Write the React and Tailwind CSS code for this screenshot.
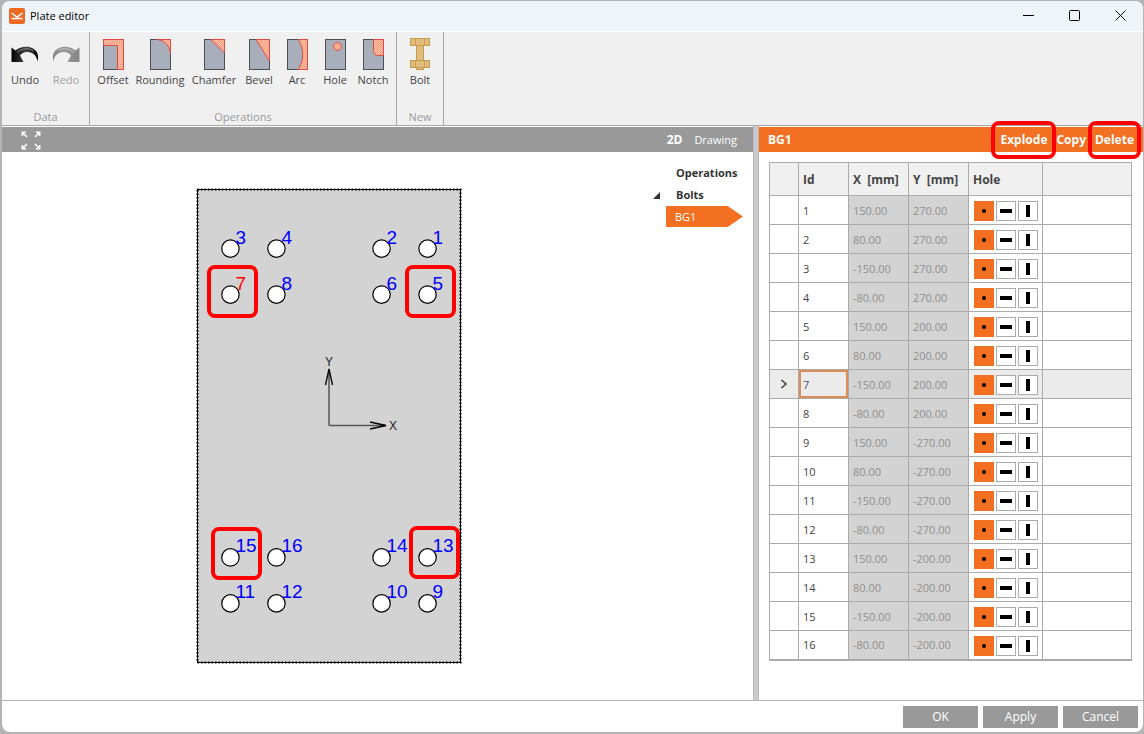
const operations = [
  { name: "Offset", width: "w-[38px]", cut: "M0.5 0.5H20.5V30.5H14.5V6.5H0.5Z" },
  { name: "Rounding", width: "w-[56px]", cut: "M7 0.5H20.5V15C20 7 14 1 7 0.5Z" },
  { name: "Chamfer", width: "w-[52px]", cut: "M7 0.5H20.5V14Z" },
  { name: "Bevel", width: "w-[38px]", cut: "M7 0.5H20.5V22Z" },
  { name: "Arc", width: "w-[38px]", cut: "M11.5 0.5H20.5V30.5H11.5C17 21 17 10 11.5 0.5Z" },
  { name: "Hole", width: "w-[38px]", cut: "M12.5 3.5A4 4 0 1 1 12.4 3.5Z" },
  { name: "Notch", width: "w-[38px]", cut: "M10.5 0.5H20.5V16.5H15.5Q10.5 16.5 10.5 11.5Z" },
]

const bolts = [
  [150, 270],
  [80, 270],
  [-150, 270],
  [-80, 270],
  [150, 200],
  [80, 200],
  [-150, 200],
  [-80, 200],
  [150, -270],
  [80, -270],
  [-150, -270],
  [-80, -270],
  [150, -200],
  [80, -200],
  [-150, -200],
  [-80, -200],
].map(([x, y], i) => ({ id: i + 1, x, y }))

const selectedId = 7

// top left corners of the highlight frames on the plate
const frames = [
  [16, 82],
  [214, 82],
  [20, 344],
  [218, 343],
]

function Logo() {
  return (
    <svg width="16" height="16" viewBox="0 0 16 16">
      <rect width="16" height="16" rx="2" fill="#ee6a23" />
      <path d="M2.5 5L8 9L13.5 5M2.5 10.5H13.5" fill="none" stroke="#fff" strokeWidth="1.5" />
    </svg>
  )
}

function UndoIcon({ redo }) {
  const id = redo ? "redoFill" : "undoFill"
  return (
    <svg width="28" height="17" viewBox="0 0 28 17" className={redo ? "-scale-x-100" : ""}>
      <defs>
        <linearGradient id={id} x1="0" y1="0" x2="1" y2="0">
          <stop offset="0" stopColor={redo ? "#858585" : "#000"} />
          <stop offset="0.55" stopColor={redo ? "#9a9a9a" : "#444"} />
          <stop offset="1" stopColor={redo ? "#858585" : "#000"} />
        </linearGradient>
      </defs>
      <path
        d="M0.5 1.5L4.5 4.5C9 0.5 17 -0.5 22 2.5C27 5.5 28 10 26.5 15.5C26 10 22 6 16.5 6C12.5 6 10 8 9 9.5L12.5 16H0.5Z"
        fill={`url(#${id})`}
      />
      <path d="M6 6.5C11 2 18 1.5 22.5 5" fill="none" stroke={redo ? "#c4c4c4" : "#888"} strokeWidth="1" />
    </svg>
  )
}

function PlateIcon({ cut }) {
  return (
    <svg width="21" height="31" viewBox="0 0 21 31">
      <defs>
        <pattern id="hatch" width="2" height="2" patternUnits="userSpaceOnUse">
          <rect width="2" height="2" fill="#ffc0a0" />
          <rect width="1" height="1" fill="#f99d85" />
          <rect x="1" y="1" width="1" height="1" fill="#f99d85" />
        </pattern>
      </defs>
      <rect x="0.5" y="0.5" width="20" height="30" fill="#a9afba" stroke="#4d4f55" />
      <path d={cut} fill="url(#hatch)" stroke="#e04a48" />
    </svg>
  )
}

function BoltIcon() {
  return (
    <svg width="20" height="32" viewBox="0 0 20 32" fill="#e0bd7b" stroke="#c39c51">
      <rect x="6.5" y="7.5" width="7" height="15" />
      <rect x="0.5" y="0.5" width="19" height="7" />
      <path d="M5.5 0.5V7.5M14.5 0.5V7.5" />
      <rect x="0.5" y="22.5" width="19" height="7" />
      <path d="M5.5 22.5V29.5M14.5 22.5V29.5" />
      <rect x="6.5" y="29.5" width="7" height="2" />
    </svg>
  )
}

function ExpandIcon() {
  return (
    <svg width="20" height="19" viewBox="0 0 20 19" fill="none" stroke="#fff" strokeWidth="1.5">
      <path d="M1.3 5V1.3H5M1.3 1.3L6 6M15 1.3H18.7V5M18.7 1.3L14 6M1.3 14V17.7H5M1.3 17.7L6 13M18.7 14V17.7H15M18.7 17.7L14 13" />
    </svg>
  )
}

function RibbonButton({ label, disabled, className = "", children }) {
  return (
    <button
      disabled={disabled}
      className={`flex flex-col items-center ${disabled ? "text-[#a0a0a0]" : "text-[#444]"} ${className}`}
    >
      <span className="flex h-8 items-center">{children}</span>
      <span className="mt-0.5 leading-4">{label}</span>
    </button>
  )
}

function RibbonGroup({ title, className, children }) {
  return (
    <section className={`flex flex-col justify-between border-r border-[#a9a9a9] pt-1.5 ${className}`}>
      <div className="flex justify-between">{children}</div>
      <h2 className="text-center leading-4 text-[#9a9a9a]">{title}</h2>
    </section>
  )
}

function Plate() {
  return (
    <svg width="272" height="482" viewBox="0 0 272 482" className="font-['Liberation_Sans',Arial,sans-serif]">
      <rect x="4.5" y="4.5" width="263" height="473" fill="#d3d3d3" stroke="#000" />
      <rect x="4.5" y="4.5" width="263" height="473" fill="none" stroke="#000" strokeWidth="2" strokeDasharray="1.5 2" />
      {bolts.map((bolt) => {
        const cx = 136 + bolt.x * 0.657
        const cy = 241 - bolt.y * 0.657
        return (
          <g key={bolt.id}>
            <circle cx={cx} cy={cy} r="8.7" fill="#fff" stroke="#000" strokeWidth="1.2" />
            <text x={cx + 5} y={cy - 5} fontSize="19" fill={bolt.id === selectedId ? "#f00" : "#00f"}>
              {bolt.id}
            </text>
          </g>
        )
      })}
      <path d="M136 240.5V184M136 240.5H193" fill="none" stroke="#555" strokeWidth="1.5" />
      <path d="M132.5 200L136 184L139.5 200M177 237L193 240.5L177 244" fill="none" stroke="#000" strokeWidth="1.3" />
      <g fontSize="12" fill="#222" textAnchor="middle">
        <text x="136" y="181">Y</text>
        <text x="200" y="245">X</text>
      </g>
      {frames.map(([x, y]) => (
        <rect key={`${x}-${y}`} x={x} y={y} width="47" height="49" rx="6" fill="none" stroke="#f00" strokeWidth="4" />
      ))}
    </svg>
  )
}

function HoleButtons({ id }) {
  return (
    <div className="flex gap-0.5 pl-[5px]">
      <button aria-label={`Round hole ${id}`} className="flex size-5 items-center justify-center bg-[#f36f21]">
        <span className="size-1 rounded-full bg-black" />
      </button>
      <button aria-label={`Horizontal slot ${id}`} className="flex size-5 items-center justify-center border border-[#ababab] bg-white">
        <span className="h-1 w-3 bg-black" />
      </button>
      <button aria-label={`Vertical slot ${id}`} className="flex size-5 items-center justify-center border border-[#ababab] bg-white">
        <span className="h-3 w-1 bg-black" />
      </button>
    </div>
  )
}

function BoltTable() {
  return (
    <table className="w-full table-fixed border-collapse border border-b-2 border-[#ababab] text-[#444]">
      <colgroup>
        <col className="w-[29px]" />
        <col className="w-[50px]" />
        <col className="w-[60px]" />
        <col className="w-[60px]" />
        <col className="w-[74px]" />
        <col />
      </colgroup>
      <thead>
        <tr className="h-[33px] bg-[#f0f0f0] text-left text-[12px] [&>th]:border [&>th]:border-[#ababab] [&>th]:px-1 [&>th]:pt-0.5 [&>th]:font-bold [&>th]:whitespace-pre">
          <th />
          <th>Id</th>
          <th>X  [mm]</th>
          <th>Y  [mm]</th>
          <th>Hole</th>
          <th />
        </tr>
      </thead>
      <tbody>
        {bolts.map((bolt) => {
          const selected = bolt.id === selectedId
          return (
            <tr
              key={bolt.id}
              className={`h-[29px] [&>td]:border [&>td]:border-[#ababab] [&>td]:p-0 ${selected ? "bg-[#ebebeb]" : "bg-white"}`}
            >
              <td>
                {selected && (
                  <svg width="8" height="10" viewBox="0 0 8 10" className="mx-auto">
                    <path d="M1.5 1L6 5L1.5 9" fill="none" stroke="#444" strokeWidth="1.6" />
                  </svg>
                )}
              </td>
              <td className="relative">
                <div className={selected ? "px-1 pt-px text-[#5a4a78]" : "px-1 pt-px"}>{bolt.id}</div>
                {selected && <span className="absolute inset-0 z-10 border-2 border-[#dc7633]/80" />}
              </td>
              <td className="bg-[#d3d3d3] text-[#909090]">
                <div className="px-1 pt-px">{bolt.x.toFixed(2)}</div>
              </td>
              <td className="bg-[#d3d3d3] text-[#909090]">
                <div className="px-1 pt-px">{bolt.y.toFixed(2)}</div>
              </td>
              <td>
                <div className="pt-0.5">
                  <HoleButtons id={bolt.id} />
                </div>
              </td>
              <td />
            </tr>
          )
        })}
      </tbody>
    </table>
  )
}

function TitleBar() {
  return (
    <header className="flex h-[31px] items-center justify-between border-b border-white bg-[#eff4f9] pr-[17px] pb-px pl-[7px] text-black">
      <div className="flex items-center gap-[5px]">
        <Logo />
        <h1>Plate editor</h1>
      </div>
      <div className="flex gap-[35px] [&_svg]:size-[11px] [&_svg]:fill-none [&_svg]:stroke-black">
        <button aria-label="Minimize">
          <svg viewBox="0 0 11 11">
            <path d="M0 5.5H11" />
          </svg>
        </button>
        <button aria-label="Maximize">
          <svg viewBox="0 0 11 11">
            <rect x="0.5" y="0.5" width="10" height="10" rx="1" />
          </svg>
        </button>
        <button aria-label="Close">
          <svg viewBox="0 0 11 11">
            <path d="M0.5 0.5L10.5 10.5M10.5 0.5L0.5 10.5" />
          </svg>
        </button>
      </div>
    </header>
  )
}

function Highlight({ className }) {
  return <span className={`pointer-events-none absolute rounded-lg border-4 border-[#f00] ${className}`} />
}

export default function App() {
  return (
    <div className="flex min-h-screen flex-col bg-[#b4b4b4] pt-px pr-px pb-0.5 pl-0.5 font-['Open_Sans','Noto_Sans',sans-serif] text-[11px] leading-4">
      <div className="flex grow flex-col overflow-hidden rounded-lg bg-white">
        <TitleBar />

        <nav className="flex h-[94px] border-b border-[#a9a9a9] bg-[#f0f0f0]">
          <RibbonGroup title="Data" className="w-[88px] px-[9px]">
            <RibbonButton label="Undo">
              <UndoIcon />
            </RibbonButton>
            <RibbonButton label="Redo" disabled>
              <UndoIcon redo />
            </RibbonButton>
          </RibbonGroup>
          <RibbonGroup title="Operations" className="w-[307px] px-1">
            {operations.map((op) => (
              <RibbonButton key={op.name} label={op.name} className={op.width}>
                <PlateIcon cut={op.cut} />
              </RibbonButton>
            ))}
          </RibbonGroup>
          <RibbonGroup title="New" className="w-[47px] px-2">
            <RibbonButton label="Bolt" className="grow">
              <BoltIcon />
            </RibbonButton>
          </RibbonGroup>
        </nav>

        <main className="flex grow border-b border-[#b5b5b5]">
          <section className="flex min-w-0 grow flex-col">
            <div className="mt-px flex h-[25px] items-center justify-between bg-[#999] pt-px pr-4 pl-[19px] text-white">
              <button aria-label="Fit to view">
                <ExpandIcon />
              </button>
              <div className="flex gap-3">
                <button className="text-[12px] font-bold">2D</button>
                <button>Drawing</button>
              </div>
            </div>
            <div className="flex grow">
              <div className="flex grow justify-center pt-[33px] pl-[3px]">
                <Plate />
              </div>
              <ul className="w-[100px] pt-2.5 text-[#333]">
                <li className="h-[22px] pl-[23px] leading-[22px] font-bold">Operations</li>
                <li className="flex h-[22px] items-center font-bold">
                  <svg width="7" height="7" viewBox="0 0 7 7" className="mr-4">
                    <path d="M7 0V7H0Z" fill="#333" />
                  </svg>
                  Bolts
                </li>
                <li className="pl-[13px]">
                  <button className="block h-[21px] w-[77px] bg-[#f36f21] pl-[9px] text-left text-white [clip-path:polygon(0_0,80%_0,100%_50%,80%_100%,0_100%)]">
                    BG1
                  </button>
                </li>
              </ul>
            </div>
          </section>

          <div className="w-1.5 border-x border-[#b8b8b8] bg-[#cbcbcb]" />

          <aside className="w-[384px]">
            <div className="mt-px flex h-[25px] items-center justify-between bg-[#f36f21] px-[9px] pt-px text-[12px] font-bold text-white">
              <h2>BG1</h2>
              <div className="flex gap-[9px]">
                <button className="relative">
                  Explode
                  <Highlight className="-inset-x-[9px] -inset-y-[11px]" />
                </button>
                <button>Copy</button>
                <button className="relative">
                  Delete
                  <Highlight className="-inset-x-[7px] -inset-y-[11px]" />
                </button>
              </div>
            </div>
            <div className="py-2.5 pr-[11px] pl-2.5">
              <BoltTable />
            </div>
          </aside>
        </main>

        <footer className="flex justify-end gap-[5px] pt-[5px] pr-[5px] pb-1 text-[12px] text-white">
          {["OK", "Apply", "Cancel"].map((label) => (
            <button key={label} className="h-[22px] w-[75px] bg-[#999]">
              {label}
            </button>
          ))}
        </footer>
      </div>
    </div>
  )
}
